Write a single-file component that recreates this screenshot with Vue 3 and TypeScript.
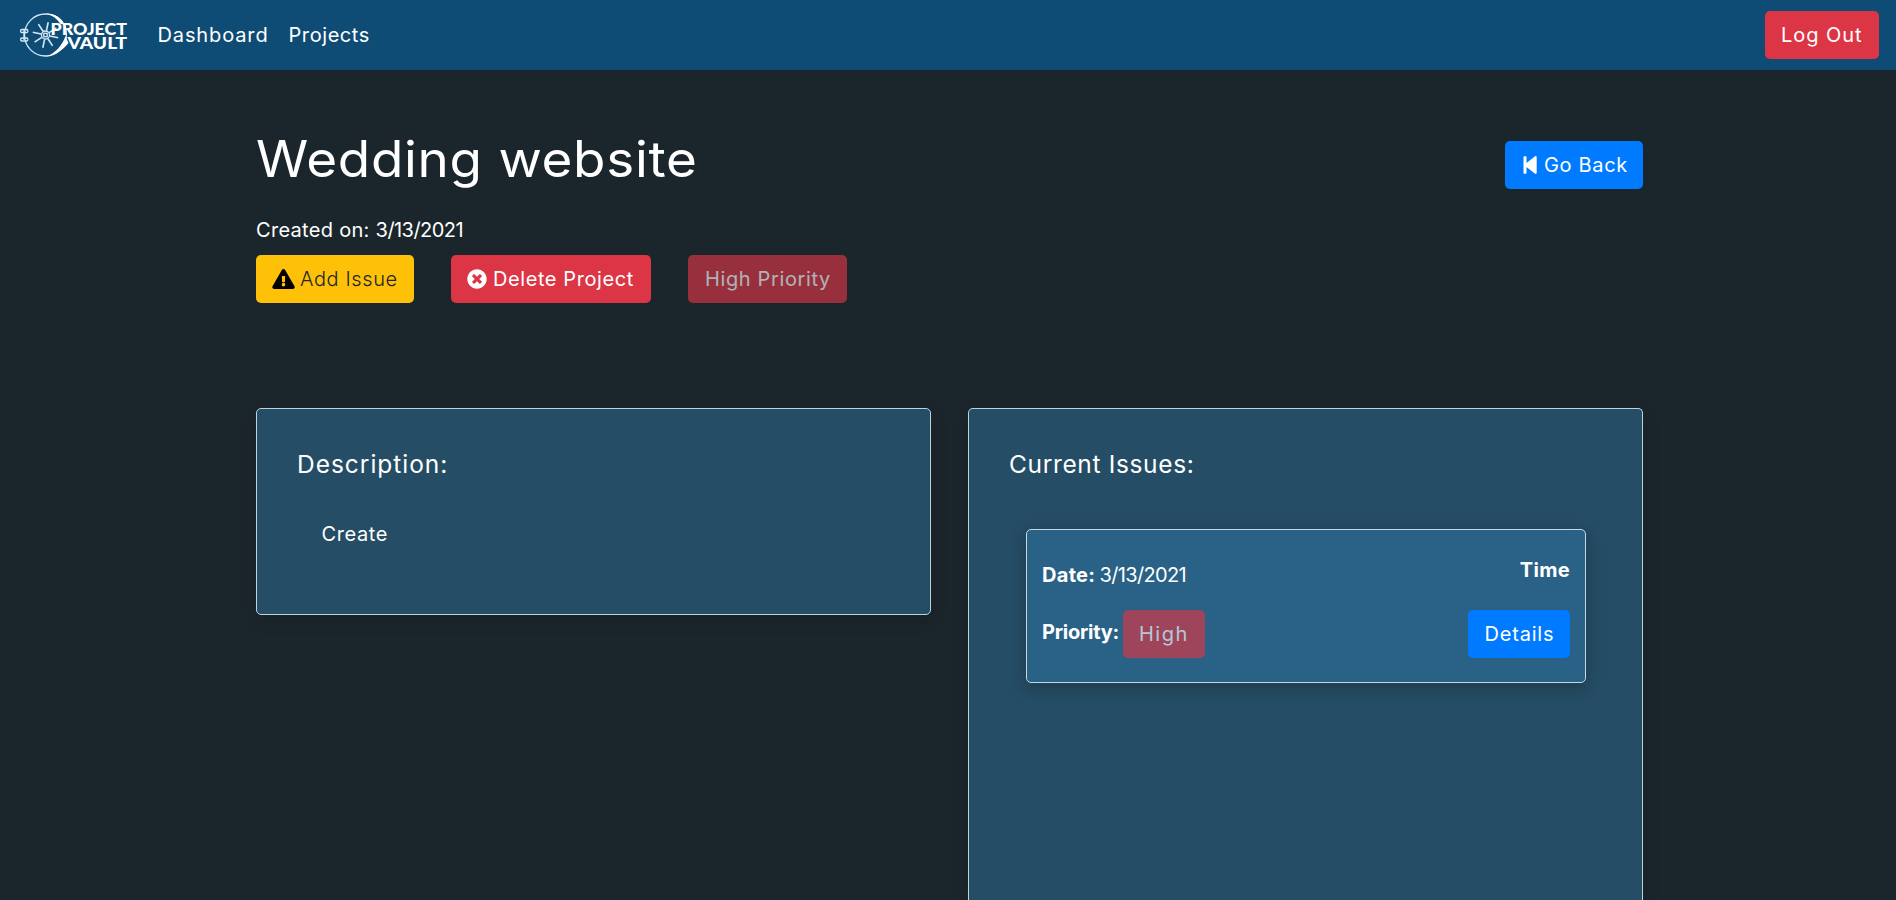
<script setup lang="ts">
interface Issue { date: string; priority: string }

const project = {
  title: 'Wedding website',
  created: '3/13/2021',
  description: 'Create',
}
const issues: Issue[] = [{ date: '3/13/2021', priority: 'High' }]
const spokes = [12, 57, 102, 147, 192, 237, 282, 327]
</script>

<template>
  <nav class="navbar">
    <a class="brand">
      <svg class="logo" width="112" height="50" viewBox="0 0 112 50">
        <g fill="none" stroke="#d4eaf8" stroke-width="1.3">
          <circle cx="27.5" cy="25" r="21" />
          <path d="M6 20v10M3.8 19.5h5c1.4 0 1.4 3 0 3h-5c-1.600 0-1.600-3 0-3zM3.800 28h5c1.400 0 1.400 3 0 3h-5c-1.600 0-1.600-3 0-3z" />
          <circle cx="27.5" cy="25" r="4" />
          <rect x="25.8" y="23.3" width="3.4" height="3.4" />
          <path v-for="a in spokes" :key="a" d="M27.5 20.5V12" :transform="`rotate(${a} 27.5 25)`" stroke-width="1.6" />
        </g>
        <path d="M28 3.500C37 3.500 44 8 46.500 14.500L42.500 14C39 8.500 34 5 28 3.500z" fill="#fff" />
        <path d="M28 46.500C37 45.500 45 40 50.500 33L47.500 26C44 36 37 43.500 28 46.500z" fill="#fff" />
        <g class="logo-text">
          <text x="32.5" y="24.6" textLength="76.5" lengthAdjust="spacingAndGlyphs">PROJECT</text>
          <text x="49.5" y="38.8" textLength="59.5" lengthAdjust="spacingAndGlyphs">VAULT</text>
        </g>
      </svg>
    </a>
    <a class="nav-link dashboard">Dashboard</a>
    <a class="nav-link projects">Projects</a>
    <button class="btn danger logout">Log Out</button>
  </nav>

  <main class="container">
    <header class="heading">
      <h1>{{ project.title }}</h1>
      <button class="btn primary back">
        <svg class="icon" width="20" height="20" viewBox="0 0 20 20">
          <path d="M3.200 1.200h1.600q.7 0 .7.7v6.200L13.800 1.400c.8-.6 1.900-.3 1.900.9v15.400c0 1.200-1.100 1.500-1.900.9L5.500 11.900v6.200q0 .7-.7.7H3.200q-.7 0-.7-.7V1.900q0-.7.7-.7z" fill="currentColor" />
        </svg>
        <span>Go Back</span>
      </button>
    </header>
    <p class="created">Created on: <span>{{ project.created }}</span></p>
    <div class="actions">
      <button class="btn warning add">
        <svg class="icon" width="23" height="20" viewBox="0 0 576 512">
          <path fill="#000" d="M569.500 440c18.500 32-4.700 72-41.600 72H48.100c-36.900 0-60-40-41.600-72L246.400 24c18.500-32 64.700-32 83.200 0l239.900 416zM288 354a46 46 0 1 0 0 92 46 46 0 0 0 0-92zm-43.700-165.300l7.400 136c.4 6.400 5.600 11.300 12 11.300h48.600c6.400 0 11.600-4.900 12-11.300l7.400-136c.4-6.900-5.100-12.700-12-12.700h-63.400c-6.900 0-12.400 5.800-12 12.700z" />
        </svg>
        <span>Add Issue</span>
      </button>
      <button class="btn danger delete">
        <svg class="icon" width="20" height="20" viewBox="0 0 512 512">
          <path fill="currentColor" d="M256 8C119 8 8 119 8 256s111 248 248 248 248-111 248-248S393 8 256 8zm121.600 313.100c4.700 4.700 4.700 12.300 0 17L338 377.600c-4.700 4.700-12.300 4.700-17 0L256 312l-65.100 65.600c-4.700 4.700-12.300 4.700-17 0L134.400 338c-4.700-4.700-4.700-12.300 0-17l65.600-65-65.600-65.100c-4.700-4.700-4.700-12.300 0-17l39.600-39.600c4.700-4.700 12.300-4.700 17 0l65 65.700 65.100-65.600c4.700-4.700 12.300-4.700 17 0l39.600 39.600c4.700 4.700 4.700 12.300 0 17L312 256l65.600 65.100z" />
        </svg>
        <span>Delete Project</span>
      </button>
      <button class="btn danger level" disabled>High Priority</button>
    </div>

    <section class="panels">
      <article class="card description">
        <h2>Description:</h2>
        <p>{{ project.description }}</p>
      </article>
      <article class="card issues">
        <h2>Current Issues:</h2>
        <div v-for="(issue, i) in issues" :key="i" class="issue">
          <div class="row">
            <p class="date"><b>Date:</b><span>{{ issue.date }}</span></p>
            <b class="time">Time</b>
          </div>
          <div class="row">
            <p class="priority"><b>Priority:</b><button class="btn danger high" disabled>{{ issue.priority }}</button></p>
            <button class="btn primary details">Details</button>
          </div>
        </div>
      </article>
    </section>
  </main>
</template>

<style>
html,
body {
  height: 100%;
  overflow: hidden;
  background: #1b262c;
}
</style>

<style scoped>
.navbar,
.container {
  color: #fff;
  font: 400 20px/30px Inter, "Open Sans", sans-serif;
}
.navbar {
  box-sizing: border-box;
  height: 70px;
  display: flex;
  align-items: center;
  padding: 0 17px 0 18px;
  background: #0f4c75;
}
.brand {
  height: 50px;
}
.logo {
  display: block;
}
.logo-text {
  font: 900 16.5px/1 Lato, sans-serif;
  fill: #fff;
}
.nav-link {
  white-space: nowrap;
}
.dashboard {
  width: 131px;
  margin-left: 27.5px;
  letter-spacing: 0.88px;
}
.projects {
  letter-spacing: 0.58px;
}
.btn {
  box-sizing: border-box;
  height: 48px;
  display: flex;
  align-items: center;
  padding: 0 0 0 16px;
  border: 0;
  border-radius: 5px;
  color: #fff;
  font: inherit;
  white-space: nowrap;
}
.btn:disabled {
  opacity: 0.65;
}
.danger {
  background: #dc3545;
}
.primary {
  background: #007bff;
}
.warning {
  background: #ffc107;
  color: #212529;
}
.icon {
  flex: none;
}
.logout {
  width: 114px;
  margin-left: auto;
  letter-spacing: 0.95px;
}
.container {
  width: 1387px;
  margin-left: 256px;
}
.heading {
  display: flex;
  justify-content: space-between;
  padding-top: 59px;
}
h1 {
  margin: 0;
  font-size: 50px;
  font-weight: 400;
  line-height: 60px;
  letter-spacing: 0.65px;
  transform: scaleX(1.06);
  transform-origin: left;
}
.back {
  width: 138px;
  margin-top: 12px;
  gap: 3px;
  letter-spacing: 0.67px;
}
.created {
  margin: 25.5px 0 10.5px;
  letter-spacing: 0.3px;
}
.created span {
  letter-spacing: -0.55px;
}
.actions {
  display: flex;
  gap: 37px;
}
.add {
  width: 158px;
  gap: 5px;
  font-weight: 300;
  letter-spacing: 0.6px;
}
.delete {
  width: 200px;
  gap: 6px;
  letter-spacing: 0.58px;
}
.level {
  width: 159px;
  padding-left: 17px;
  letter-spacing: 0.63px;
}
.panels {
  display: grid;
  grid-template-columns: 675px 675px;
  gap: 37px;
  align-items: start;
  margin-top: 105px;
}
.card {
  box-sizing: border-box;
  padding: 40px 40px 0 40px;
  border: 1px solid #b9d3df;
  border-radius: 5px;
  background: #254d65;
  box-shadow: 0 5px 15px rgba(20, 20, 20, 0.3);
}
.description {
  height: 207px;
}
.issues {
  height: 492px;
  border-bottom: 0;
  border-radius: 5px 5px 0 0;
}
h2 {
  margin: 0;
  font-size: 24.5px;
  font-weight: 400;
  line-height: 30px;
  letter-spacing: 0.65px;
}
.description h2 {
  letter-spacing: 0.98px;
}
.description p {
  margin: 39.5px 0 0 24.5px;
  letter-spacing: 0.6px;
}
.issue {
  box-sizing: border-box;
  width: 560px;
  height: 154px;
  margin: 50px 0 0 17px;
  padding: 25px 15px 0;
  border: 1px solid #c3d9e6;
  border-radius: 5px;
  background: #2a6287;
  box-shadow: 0 5px 15px rgba(20, 20, 20, 0.3);
}
.row {
  display: flex;
  justify-content: space-between;
  height: 55px;
}
.row p {
  display: flex;
  margin: 0;
}
.row b {
  font-weight: 700;
}
.date {
  padding-top: 5px;
}
.date b {
  width: 57.5px;
  letter-spacing: 0.3px;
}
.date span {
  letter-spacing: -0.65px;
}
.time {
  letter-spacing: 0.3px;
}
.priority b {
  width: 81px;
  padding-top: 7px;
  letter-spacing: -0.24px;
}
.high {
  width: 82px;
  letter-spacing: 1.5px;
}
.details {
  width: 102px;
  padding-left: 16.5px;
  letter-spacing: 0.81px;
}
</style>
